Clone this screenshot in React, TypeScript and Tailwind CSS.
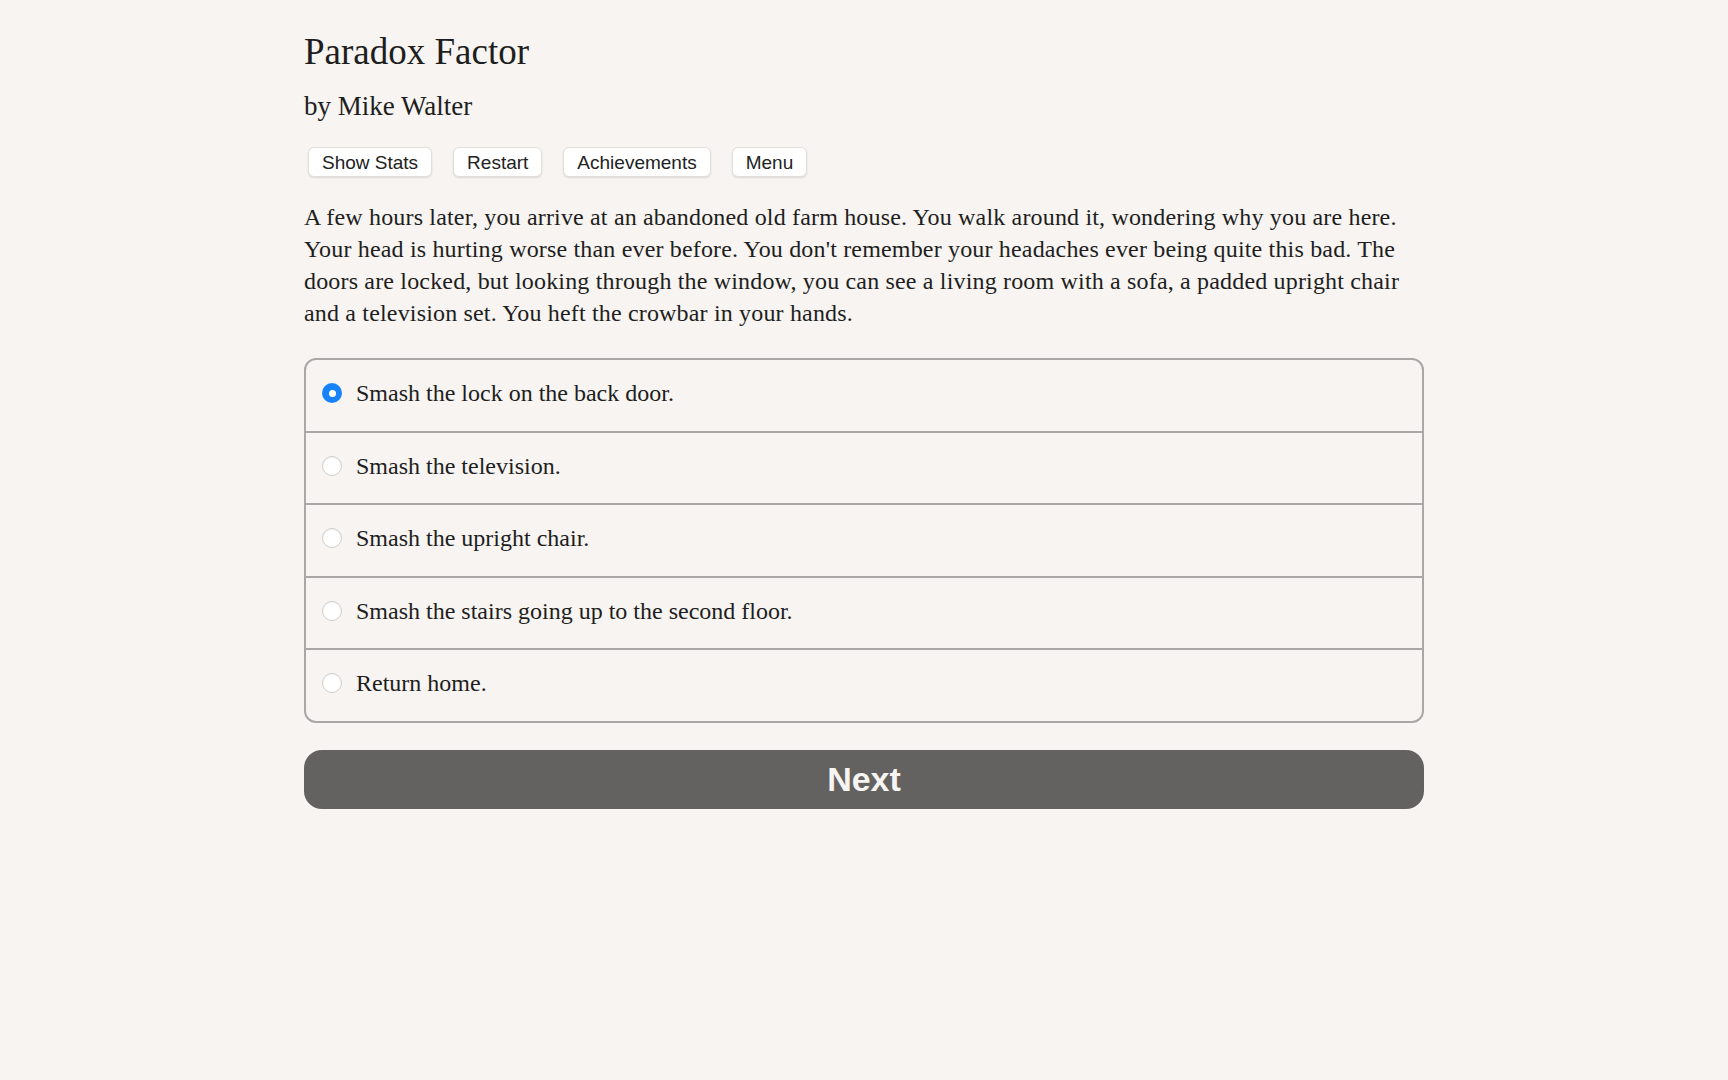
import { useState } from 'react'

const serif = "font-['Liberation_Serif','Times_New_Roman',serif]"
const sans = "font-['Liberation_Sans',Arial,sans-serif]"

const toolbar = ['Show Stats', 'Restart', 'Achievements', 'Menu']

const passage = [
  'A few hours later, you arrive at an abandoned old farm house. You walk around it, wondering why you are here.',
  "Your head is hurting worse than ever before. You don't remember your headaches ever being quite this bad. The",
  'doors are locked, but looking through the window, you can see a living room with a sofa, a padded upright chair',
  'and a television set. You heft the crowbar in your hands.',
]

const choices = [
  'Smash the lock on the back door.',
  'Smash the television.',
  'Smash the upright chair.',
  'Smash the stairs going up to the second floor.',
  'Return home.',
]

export default function App() {
  const [picked, setPicked] = useState(0)

  return (
    <div className="min-h-screen bg-[#f7f4f1] text-[#1e1e1e]">
      <div className="mx-auto w-[1120px] pt-[30px]">
        {/* Header */}
        <h1 className={`${serif} text-[37px] leading-[44px]`}>Paradox Factor</h1>
        <h2 className={`${serif} mt-[14px] text-[27px] leading-[36px]`}>by Mike Walter</h2>

        {/* Buttons */}
        <div className="mt-[23px] ml-[4px] flex gap-[21px]">
          {toolbar.map((label) => (
            <button
              key={label}
              className={`${sans} h-[30px] px-[13px] rounded-[6px] bg-white border border-[#e2dfdb] shadow-[0_1px_2px_rgba(0,0,0,0.12)] text-[19px] leading-none text-[#222]`}
            >
              {label}
            </button>
          ))}
        </div>

        {/* Passage */}
        <div className={`${serif} mt-[24px] text-[24px] leading-[32px] tracking-[0.17px]`}>
          {passage.map((line, i) => (
            <p key={i} className="whitespace-nowrap">
              {line}
            </p>
          ))}
        </div>

        {/* Choices */}
        <div className="mt-[29px] rounded-[12px] border-2 border-[#a9a8a6] overflow-hidden">
          {choices.map((label, i) => (
            <label
              key={label}
              onClick={() => setPicked(i)}
              className={`flex items-center pl-[16px] pb-[4px] cursor-pointer ${i > 0 ? 'h-[72.5px] border-t-2 border-[#a9a8a6]' : 'h-[70.5px]'}`}
            >
              {picked === i ? (
                <span className="w-[20px] h-[20px] rounded-full bg-[#1683fb] flex items-center justify-center">
                  <span className="w-[7px] h-[7px] rounded-full bg-white" />
                </span>
              ) : (
                <span className="w-[20px] h-[20px] rounded-full bg-white border border-[#cfcdca] shadow-[inset_0_1px_1px_rgba(0,0,0,0.06)]" />
              )}
              <span className={`${serif} ml-[14px] text-[24px] leading-[32px]`}>{label}</span>
            </label>
          ))}
        </div>

        {/* Next */}
        <button
          className={`${sans} mt-[27px] w-full h-[59px] rounded-[18px] bg-[#636260] text-[#f7f4f1] font-bold text-[34px] leading-none`}
        >
          Next
        </button>
      </div>
    </div>
  )
}
